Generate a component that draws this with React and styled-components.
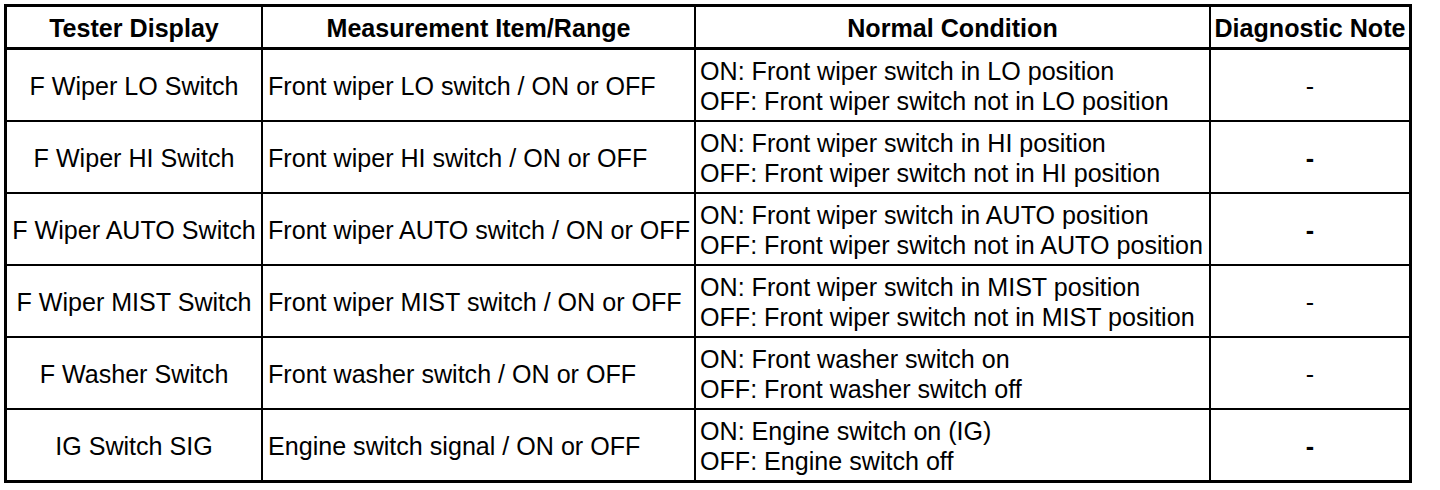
import styled, { createGlobalStyle } from "styled-components";

const GlobalStyle = createGlobalStyle`
  body {
    margin: 0;
    background: #fff;
    font-family: "Liberation Sans", Arial, sans-serif;
    color: #000;
  }
`;

const rows = [
  {
    display: "F Wiper LO Switch",
    item: "Front wiper LO switch / ON or OFF",
    on: "ON: Front wiper switch in LO position",
    off: "OFF: Front wiper switch not in LO position",
  },
  {
    display: "F Wiper HI Switch",
    item: "Front wiper HI switch / ON or OFF",
    on: "ON: Front wiper switch in HI position",
    off: "OFF: Front wiper switch not in HI position",
    boldNote: true,
  },
  {
    display: "F Wiper AUTO Switch",
    item: "Front wiper AUTO switch / ON or OFF",
    on: "ON: Front wiper switch in AUTO position",
    off: "OFF: Front wiper switch not in AUTO position",
    boldNote: true,
  },
  {
    display: "F Wiper MIST Switch",
    item: "Front wiper MIST switch / ON or OFF",
    on: "ON: Front wiper switch in MIST position",
    off: "OFF: Front wiper switch not in MIST position",
  },
  {
    display: "F Washer Switch",
    item: "Front washer switch / ON or OFF",
    on: "ON: Front washer switch on",
    off: "OFF: Front washer switch off",
  },
  {
    display: "IG Switch SIG",
    item: "Engine switch signal / ON or OFF",
    on: "ON: Engine switch on (IG)",
    off: "OFF: Engine switch off",
    boldNote: true,
  },
];

const App = () => {
  return (
    <Page>
      <GlobalStyle />
      <Table>
        <colgroup>
          <col style={{ width: 256 }} />
          <col style={{ width: 433 }} />
          <col style={{ width: 515 }} />
          <col style={{ width: 198 }} />
        </colgroup>
        <thead>
          <tr>
            <Th>Tester Display</Th>
            <Th>Measurement Item/Range</Th>
            <Th>Normal Condition</Th>
            <Th $last>Diagnostic Note</Th>
          </tr>
        </thead>
        <tbody>
          {rows.map((r, i) => (
            <Row key={r.display} $last={i === rows.length - 1}>
              <Td $align="center">{r.display}</Td>
              <Td $pad="5px">{r.item}</Td>
              <Td $pad="4px">
                <Line>{r.on}</Line>
                <Line>{r.off}</Line>
              </Td>
              <Td $align="center" $lastCol $bold={r.boldNote}>
                -
              </Td>
            </Row>
          ))}
        </tbody>
      </Table>
    </Page>
  );
};
export default App;

const Page = styled.div`
  padding: 4px;
`;

const Table = styled.table`
  width: 1408px;
  table-layout: fixed;
  border-collapse: separate;
  border-spacing: 0;
  border: 3px solid #000;
  font-size: 25.1px;
  line-height: 30px;
`;

const Th = styled.th`
  box-sizing: border-box;
  height: 43px;
  padding: 2px 0 0;
  font-weight: 700;
  text-align: center;
  white-space: nowrap;
  border-bottom: 3px solid #000;
  border-right: ${(p) => (p.$last ? "none" : "2px solid #000")};
`;

const Row = styled.tr`
  td {
    height: ${(p) => (p.$last ? "70px" : "72px")};
    border-bottom: ${(p) => (p.$last ? "none" : "2px solid #000")};
  }
`;

const Td = styled.td`
  box-sizing: border-box;
  padding: 2px 0 0 ${(p) => p.$pad || "0"};
  text-align: ${(p) => p.$align || "left"};
  font-weight: ${(p) => (p.$bold ? 700 : 400)};
  white-space: nowrap;
  vertical-align: middle;
  border-right: ${(p) => (p.$lastCol ? "none" : "2px solid #000")};
`;

const Line = styled.div`
  line-height: 30px;
`;
